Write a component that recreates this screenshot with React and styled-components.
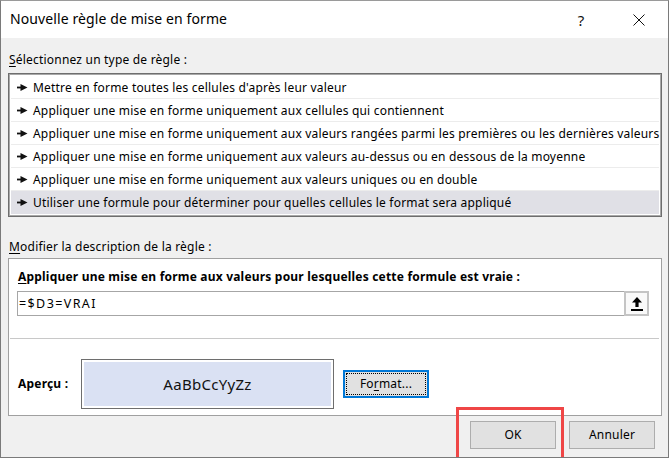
import React from "react";
import styled, { createGlobalStyle } from "styled-components";

const FONT = `"Noto Sans", "Open Sans", sans-serif`;

const GlobalStyle = createGlobalStyle`
  *, *::before, *::after { box-sizing: border-box; }
  html, body { margin: 0; padding: 0; background: #ffffff; }
  body { font-family: ${FONT}; font-size: 12px; letter-spacing: 0.2px; color: #000; }
`;

const Window = styled.div`
  position: relative;
  width: 669px;
  height: 458px;
  border: 1px solid #7a7a7a;
  border-top-color: #9a9a9a;
  background: #f0f0f0;
  display: flex;
  flex-direction: column;
  overflow: hidden;
`;

const TitleBar = styled.div`
  height: 37px;
  background: #ffffff;
  display: flex;
  align-items: center;
  padding-left: 9px;
  flex-shrink: 0;
`;

const TitleText = styled.div`
  flex: 1;
  font-size: 14px;
  letter-spacing: 0.1px;
  color: #000;
  line-height: 20px;
  padding-bottom: 1px;
`;

const CaptionButton = styled.div`
  width: 46px;
  height: 37px;
  display: flex;
  align-items: center;
  justify-content: center;
  font-size: 15px;
  color: #111;
  margin-left: ${(p) => p.$ml || 0}px;
  margin-right: ${(p) => p.$mr || 0}px;
`;

const Body = styled.div`
  flex: 1;
  display: flex;
  flex-direction: column;
  padding: 0 6px 0 7px;
`;

const SectionLabel = styled.div`
  margin-top: ${(p) => p.$mt}px;
  line-height: 16px;
  height: 16px;
  padding-left: 1px;
  u { text-decoration: underline; text-underline-offset: 2px; }
`;

const ListBox = styled.div`
  margin-top: 5px;
  border: 1px solid #6e6e6e;
  box-shadow: inset 0 0 0 1px #a8a8a8;
  background: #ffffff;
  padding: 2px 2px;
  display: flex;
  flex-direction: column;
`;

const RuleRow = styled.div`
  height: 23px;
  display: flex;
  align-items: center;
  padding-left: 6px;
  gap: 5px;
  white-space: nowrap;
  background: ${(p) => (p.$selected ? "#e0e0e6" : "transparent")};
  border-bottom: ${(p) => (p.$last ? "none" : "1px solid #ececec")};
  padding-top: ${(p) => (p.$last ? 0 : 1)}px;
`;

const Panel = styled.div`
  margin-top: 3px;
  height: 158px;
  background: #ffffff;
  border: 1px solid #a0a0a0;
  padding: 10px 12px 0 8px;
  display: flex;
  flex-direction: column;
`;

const Heading = styled.div`
  font-weight: 700;
  line-height: 16px;
  padding-left: 1px;
  white-space: nowrap;
  u { text-decoration: underline; text-underline-offset: 2px; }
`;

const FormulaField = styled.div`
  margin-top: 6px;
  height: 25px;
  border: 1px solid #a6a6a6;
  display: flex;
  align-items: stretch;
`;

const FormulaText = styled.div`
  flex: 1;
  display: flex;
  align-items: center;
  padding-left: 1px;
  font-size: 12.5px;
  letter-spacing: 1.4px;
  padding-bottom: 1px;
`;

const CollapseButton = styled.div`
  width: 25px;
  margin: -1px -1px -1px 0;
  border: 2px solid #c4c4c4;
  background: #f9f9f9;
  display: flex;
  align-items: center;
  justify-content: center;
`;

const Divider = styled.div`
  margin: 22px -10px 0 -7px;
  height: 1px;
  background: #c8c8c8;
`;

const PreviewRow = styled.div`
  margin-top: 20px;
  display: flex;
  align-items: center;
`;

const PreviewLabel = styled.div`
  width: 64px;
  font-weight: 700;
  padding-left: 1px;
  padding-bottom: 1px;
`;

const PreviewBox = styled.div`
  width: 253px;
  height: 50px;
  border: 1px solid #6e6e6e;
  padding: 2px;
  background: #ffffff;
`;

const PreviewFill = styled.div`
  height: 100%;
  background: #dae1f3;
  display: flex;
  align-items: center;
  justify-content: center;
  font-size: 15px;
  letter-spacing: 0.3px;
  color: #111;
  padding-bottom: 1px;
`;

const Button = styled.div`
  position: relative;
  width: 86px;
  height: 28px;
  background: #e1e1e1;
  border: ${(p) => (p.$focused ? "2px solid #0078d7" : "1px solid #adadad")};
  margin-left: ${(p) => p.$ml || 0}px;
  display: flex;
  align-items: center;
  justify-content: center;
  padding-bottom: 1px;
  u { text-decoration: underline; text-underline-offset: 2px; }
  ${(p) =>
    p.$focused &&
    `&::after {
      content: "";
      position: absolute;
      inset: 1px;
      border: 1px dotted #000;
    }`}
`;

const Footer = styled.div`
  display: flex;
  justify-content: flex-end;
  gap: 13px;
  padding-top: 5px;
  padding-right: 7px;
`;

const Highlight = styled.div`
  position: absolute;
  left: 455px;
  top: 406px;
  width: 108px;
  height: 56px;
  border: 3px solid #ef4646;
  pointer-events: none;
`;

const Arrow = () => (
  <svg width="11" height="7" viewBox="0 0 11 7" style={{ flexShrink: 0 }}>
    <rect x="0" y="2.6" width="5" height="1.8" fill="#111" />
    <polygon points="3.5,0 10.5,3.5 3.5,7" fill="#111" />
  </svg>
);

const UploadIcon = () => (
  <svg width="12" height="14" viewBox="0 0 12 14">
    <polygon points="6,0 11,5.5 7.6,5.5 7.6,10 4.4,10 4.4,5.5 1,5.5" fill="#000" />
    <rect x="0" y="12" width="12" height="2" fill="#000" />
  </svg>
);

const CloseIcon = () => (
  <svg width="12" height="12" viewBox="0 0 12 12">
    <path d="M0.5 0.5 L11.5 11.5 M11.5 0.5 L0.5 11.5" stroke="#111" strokeWidth="1" />
  </svg>
);

const rules = [
  "Mettre en forme toutes les cellules d'après leur valeur",
  "Appliquer une mise en forme uniquement aux cellules qui contiennent",
  "Appliquer une mise en forme uniquement aux valeurs rangées parmi les premières ou les dernières valeurs",
  "Appliquer une mise en forme uniquement aux valeurs au-dessus ou en dessous de la moyenne",
  "Appliquer une mise en forme uniquement aux valeurs uniques ou en double",
  "Utiliser une formule pour déterminer pour quelles cellules le format sera appliqué",
];

export default function App() {
  return (
    <>
      <GlobalStyle />
      <Window>
        <TitleBar>
          <TitleText>Nouvelle règle de mise en forme</TitleText>
          <CaptionButton>?</CaptionButton>
          <CaptionButton $ml={12} $mr={6}>
            <CloseIcon />
          </CaptionButton>
        </TitleBar>
        <Body>
          <SectionLabel $mt={14}>
            <u>S</u>électionnez un type de règle :
          </SectionLabel>
          <ListBox>
            {rules.map((r, i) => (
              <RuleRow key={i} $selected={i === rules.length - 1} $last={i === rules.length - 1}>
                <Arrow />
                <span>{r}</span>
              </RuleRow>
            ))}
          </ListBox>
          <SectionLabel $mt={22}>
            <u>M</u>odifier la description de la règle :
          </SectionLabel>
          <Panel>
            <Heading>
              <u>A</u>ppliquer une mise en forme aux valeurs pour lesquelles cette formule est vraie :
            </Heading>
            <FormulaField>
              <FormulaText>=$D3=VRAI</FormulaText>
              <CollapseButton>
                <UploadIcon />
              </CollapseButton>
            </FormulaField>
            <Divider />
            <PreviewRow>
              <PreviewLabel>Aperçu :</PreviewLabel>
              <PreviewBox>
                <PreviewFill>AaBbCcYyZz</PreviewFill>
              </PreviewBox>
              <Button $focused $ml={9}>
                Fo<u>r</u>mat...
              </Button>
            </PreviewRow>
          </Panel>
          <Footer>
            <Button>OK</Button>
            <Button>Annuler</Button>
          </Footer>
        </Body>
        <Highlight />
      </Window>
    </>
  );
}
